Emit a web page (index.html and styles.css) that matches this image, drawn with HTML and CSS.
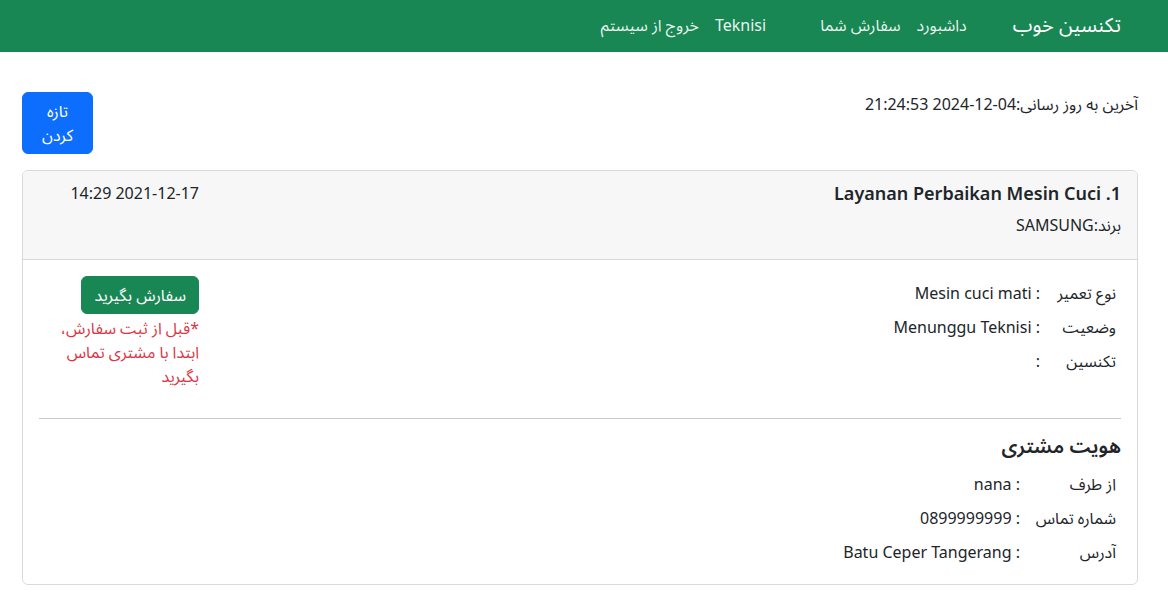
FILE: index.html
```html
<!DOCTYPE html>
<html lang="fa" dir="rtl">
<head>
<meta charset="utf-8">
<title>تکنسین خوب</title>
<link rel="stylesheet" href="styles.css">
</head>
<body>
<nav class="navbar">
  <a class="brand" href="#">تکنسین خوب</a>
  <ul class="nav">
    <li><a class="nav-link" href="#">داشبورد</a></li>
    <li><a class="nav-link" href="#">سفارش شما</a></li>
  </ul>
  <ul class="nav nav-end">
    <li><a class="nav-link" href="#">Teknisi</a></li>
    <li><a class="nav-link" href="#">خروج از سیستم</a></li>
  </ul>
</nav>
<main class="container">
  <div class="top-row">
    <p class="last-update">آخرین به روز رسانی:<span class="ts" dir="rtl">2024-12-04 21:24:53</span></p>
    <button class="btn btn-primary btn-refresh">تازه کردن</button>
  </div>
  <section class="card">
    <header class="card-header">
      <div class="head-main">
        <h5 class="order-title">1. Layanan Perbaikan Mesin Cuci</h5>
        <p class="brand-line">برند:SAMSUNG</p>
      </div>
      <div class="side-col">
        <p class="order-date">2021-12-17 14:29</p>
      </div>
    </header>
    <div class="card-body">
      <div class="body-top">
        <table class="info-table">
          <tr><td class="lbl">نوع تعمیر</td><td class="val">: Mesin cuci mati</td></tr>
          <tr><td class="lbl">وضعیت</td><td class="val">: Menunggu Teknisi</td></tr>
          <tr><td class="lbl">تکنسین</td><td class="val">:</td></tr>
        </table>
        <div class="side-col">
          <button class="btn btn-success">سفارش بگیرید</button>
          <p class="warn">*قبل از ثبت سفارش، ابتدا با مشتری تماس بگیرید</p>
        </div>
      </div>
      <hr class="divider">
      <h5 class="cust-title">هویت مشتری</h5>
      <table class="info-table cust-table">
        <tr><td class="lbl">از طرف</td><td class="val">: nana</td></tr>
        <tr><td class="lbl">شماره تماس</td><td class="val">: 0899999999</td></tr>
        <tr><td class="lbl">آدرس</td><td class="val">: Batu Ceper Tangerang</td></tr>
      </table>
    </div>
  </section>
</main>
</body>
</html>
```
FILE: styles.css
```css
* { box-sizing: border-box; }
html, body {
  margin: 0;
  padding: 0;
}
body {
  font-family: "Noto Sans", "Noto Sans Arabic", "DejaVu Sans", sans-serif;
  font-size: 16px;
  line-height: 1.5;
  color: #212529;
  background: #fff;
}
p, h5 { margin: 0; }
a { text-decoration: none; }

.navbar {
  display: flex;
  align-items: center;
  height: 52px;
  background: #198754;
  padding: 0 47px 2px 0;
}
.brand {
  color: #fff;
  font-size: 20px;
  line-height: 30px;
  margin-left: 38px;
}
.nav {
  display: flex;
  list-style: none;
  margin: 0;
  padding: 0;
}
.nav-end { margin-right: 38px; }
.nav-link {
  display: block;
  padding: 0 8px;
  color: rgba(255,255,255,.92);
  line-height: 24px;
}

.container {
  padding: 40px 30px 0 22px;
}
.top-row {
  display: flex;
  justify-content: space-between;
  align-items: flex-start;
}
.ts { unicode-bidi: isolate; }
.btn {
  font-family: inherit;
  font-size: 16px;
  line-height: 24px;
  padding: 6px 12px;
  border: 1px solid transparent;
  border-radius: 6px;
  color: #fff;
  cursor: pointer;
}
.btn-primary { background: #0d6efd; border-color: #0d6efd; }
.btn-success { background: #198754; border-color: #198754; }
.btn-refresh { width: 71px; }

.card {
  margin-top: 16px;
  border: 1px solid #d9dadb;
  border-radius: 6px;
}
.card-header {
  display: flex;
  justify-content: space-between;
  background: #f7f7f7;
  border-bottom: 1px solid #d9dadb;
  border-radius: 5px 5px 0 0;
  padding: 10px 16px 22px;
}
.order-title {
  font-size: 18px;
  font-weight: 600;
  line-height: 24px;
  margin-bottom: 8px;
}
.side-col {
  width: 160px;
  display: flex;
  flex-direction: column;
  align-items: flex-start;
}
.card-body { padding: 16px 16px 15px; }
.body-top {
  display: flex;
  justify-content: space-between;
  align-items: flex-start;
}
.info-table { border-collapse: collapse; }
.info-table td {
  padding: 5px 5px 5px 3px;
  line-height: 24px;
  vertical-align: top;
}
.info-table td.lbl { width: 78px; }
.cust-table td.lbl { width: 98px; }
.info-table td.val { padding-right: 3px; }
.btn-success { margin-bottom: 2px; }
.warn { color: #dc3545; }
.divider {
  border: 0;
  border-top: 1px solid #c8c8c8;
  margin: 30px 0 15px;
}
.cust-title {
  font-size: 20px;
  font-weight: 600;
  line-height: 24px;
  margin-bottom: 9px;
}
```
